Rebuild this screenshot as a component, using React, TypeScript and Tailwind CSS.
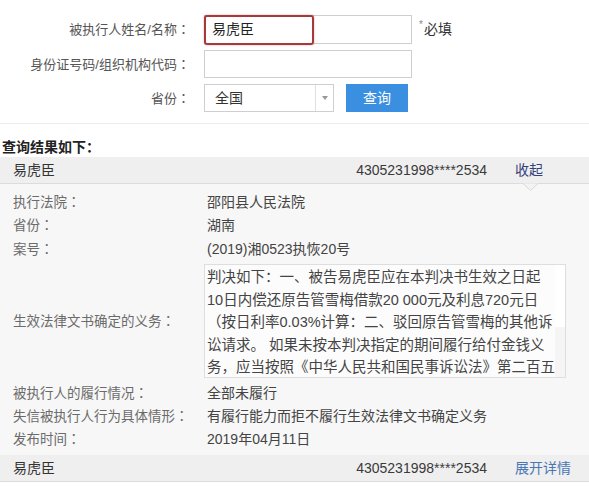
import React from "react";

const font = "font-['Liberation_Sans','Noto_Sans_CJK_SC',sans-serif]";

const obligation = [
  "判决如下：一、被告易虎臣应在本判决书生效之日起",
  "10日内偿还原告管雪梅借款20 000元及利息720元日",
  "（按日利率0.03%计算：二、驳回原告管雪梅的其他诉",
  "讼请求。 如果未按本判决指定的期间履行给付金钱义",
  "务，应当按照《中华人民共和国民事诉讼法》第二百五",
];

// centred full-width colon, as the reference renders it
function Label({ text }: { text: string }) {
  return (
    <>
      {text}
      <span className="font-['Noto_Sans_CJK_TC',sans-serif]">：</span>
    </>
  );
}

function FormLabel({ text }: { text: string }) {
  return (
    <div className="w-[190px] shrink-0 text-right text-[13px] leading-[18px] text-[#555]">
      <Label text={text} />
    </div>
  );
}

function DetailRow({ label, value, h }: { label: string; value: string; h: string }) {
  return (
    <div className={`flex items-center pl-[13px] ${h}`}>
      <div className="w-[194px] shrink-0 text-[13.5px] leading-[18px] text-[#6b6b6b]">
        <Label text={label} />
      </div>
      <div className="whitespace-nowrap text-[14px] leading-[18px] text-[#444]">{value}</div>
    </div>
  );
}

function ResultHeader({ link, linkColor, open }: { link: string; linkColor: string; open?: boolean }) {
  return (
    <div className="relative flex h-[27px] items-center border-b border-[#dcdcdc] bg-[#efefef] text-[14px] leading-[18px]">
      <div className="flex-1 pl-[13px] text-[#333]">易虎臣</div>
      <div className="text-[#3a3a3a]">4305231998****2534</div>
      <div className={`ml-[28px] w-[74px] ${linkColor}`}>{link}</div>
      {open && (
        <svg className="absolute left-[523px] top-[26px]" width="15" height="8" viewBox="0 0 15 8">
          <path d="M0 0.5 L7.5 7.5 L15 0.5" fill="#f3f3f3" stroke="#d6d6d6" strokeWidth="1" />
        </svg>
      )}
    </div>
  );
}

export default function App() {
  return (
    <div className={`h-[489px] w-[589px] overflow-hidden bg-white ${font}`}>
      {/* search form */}
      <div className="pt-[15px]">
        <div className="flex h-[29px] items-center">
          <FormLabel text="被执行人姓名/名称" />
          <div className="relative ml-[14px] flex h-[29px] w-[208px] items-center border border-[#cfcfcf] bg-white pl-[7px] text-[14px] text-[#222]">
            易虎臣
            <div className="absolute -left-px -top-px h-[30px] w-[110px] rounded-[3px] border-2 border-[#a8393a] shadow-[0_0_2px_rgba(120,20,20,0.4)]" />
          </div>
          <div className="ml-[7px] flex items-start text-[14px] text-[#333]">
            <span className="mr-[1px] text-[10px] leading-[12px] text-[#888]">*</span>
            必填
          </div>
        </div>
        <div className="mt-[6px] flex h-[28px] items-center">
          <FormLabel text="身份证号码/组织机构代码" />
          <div className="ml-[14px] h-[28px] w-[208px] border border-[#cfcfcf] bg-white" />
        </div>
        <div className="mt-[6px] flex h-[28px] items-center">
          <FormLabel text="省份" />
          <div className="ml-[14px] flex h-[28px] w-[130px] border border-[#cfcfcf] bg-white">
            <div className="flex flex-1 items-center pl-[10px] text-[14px] text-[#333]">全国</div>
            <div className="flex w-[18px] items-center justify-center border-l border-[#e0e0e0]">
              <div className="h-0 w-0 border-x-[3px] border-t-[4px] border-x-transparent border-t-[#999]" />
            </div>
          </div>
          <div className="ml-[12px] flex h-[28px] w-[62px] items-center justify-center bg-[#3b8fe0] text-[14px] text-white">
            查询
          </div>
        </div>
      </div>

      <div className="mt-[11px] h-px bg-[#ececec]" />

      <div className="h-[33px] pl-[2px] pt-[14px] text-[14px] font-bold leading-[18px] text-[#222]">
        查询结果如下：
      </div>

      <ResultHeader link="收起" linkColor="text-[#34427a]" open />

      {/* details */}
      <div className="bg-[#f7f7f7] pb-[5px] pt-[6px]">
        <DetailRow label="执行法院" value="邵阳县人民法院" h="h-[23.5px]" />
        <DetailRow label="省份" value="湖南" h="h-[23.5px]" />
        <DetailRow label="案号" value="(2019)湘0523执恢20号" h="h-[23.5px]" />

        <div className="mt-[3.5px] flex items-center pl-[13px]">
          <div className="w-[191px] shrink-0 text-[13.5px] leading-[18px] text-[#6b6b6b]">
            <Label text="生效法律文书确定的义务" />
          </div>
          <div className="flex h-[114px] w-[362px] border border-[#dedede] bg-[#fcfcfc]">
            <div className="flex-1 overflow-hidden pl-[2px] pt-[1px]">
              {obligation.map((line) => (
                <div key={line} className="h-[22.5px] whitespace-nowrap text-[14.5px] leading-[22.5px] text-[#444]">
                  {line}
                </div>
              ))}
            </div>
            <div className="w-[10px] shrink-0 bg-[#f5f5f5]">
              <div className="h-[62px] bg-white" />
            </div>
          </div>
        </div>

        <div className="pt-[3px]">
          <DetailRow label="被执行人的履行情况" value="全部未履行" h="h-[23px]" />
          <DetailRow label="失信被执行人行为具体情形" value="有履行能力而拒不履行生效法律文书确定义务" h="h-[23px]" />
          <DetailRow label="发布时间" value="2019年04月11日" h="h-[23px]" />
        </div>
      </div>

      <ResultHeader link="展开详情" linkColor="text-[#4a76b4]" />

      {/* next result, cut off by the bottom of the screenshot */}
      <div className="flex h-[27px] items-center bg-white text-[14px] leading-[18px]">
        <div className="flex-1 pl-[13px] text-[#333]">易虎臣</div>
        <div className="text-[#3a3a3a]">4305231998****2534</div>
        <div className="ml-[28px] w-[74px] text-[#4a76b4]">展开详情</div>
      </div>
    </div>
  );
}
